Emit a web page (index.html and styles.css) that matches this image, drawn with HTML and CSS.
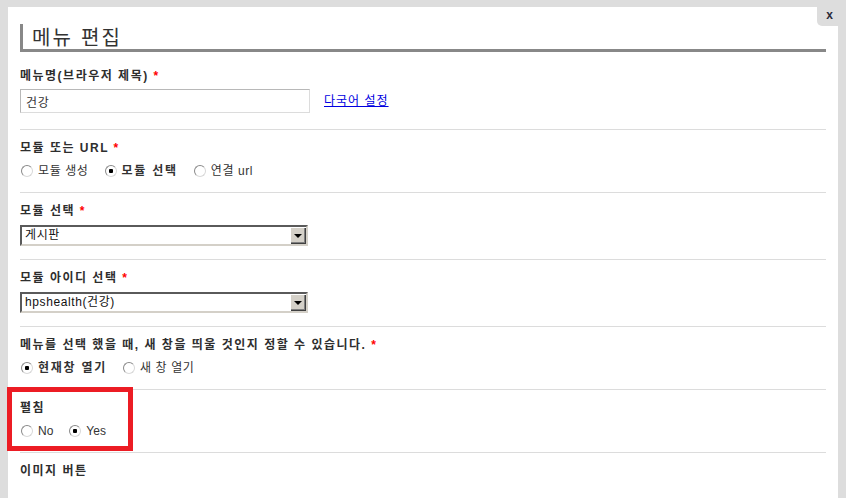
FILE: index.html
```html
<!DOCTYPE html>
<html lang="ko">

<head>
    <meta charset="UTF-8">
    <title>메뉴 편집</title>
    <link rel="stylesheet" href="styles.css">
</head>

<body>
    <div class="panel">
        <a class="close" href="#">x</a>
        <h1 class="title">메뉴 편집</h1>

        <div class="field first">
            <div class="field-label">메뉴명(브라우저 제목) <em>*</em></div>
            <div class="row">
                <input class="text-input" type="text" value="건강">
                <a class="link" href="#">다국어 설정</a>
            </div>
        </div>

        <div class="field">
            <div class="field-label">모듈 또는 URL <em>*</em></div>
            <div class="radios">
                <label><input type="radio" name="type">모듈 생성</label>
                <label class="on"><input type="radio" name="type" checked>모듈 선택</label>
                <label><input type="radio" name="type">연결 url</label>
            </div>
        </div>

        <div class="field">
            <div class="field-label">모듈 선택 <em>*</em></div>
            <div class="select"><span class="select-text">게시판</span><span class="select-btn"></span></div>
        </div>

        <div class="field">
            <div class="field-label">모듈 아이디 선택 <em>*</em></div>
            <div class="select"><span class="select-text">hpshealth(건강)</span><span class="select-btn"></span></div>
        </div>

        <div class="field">
            <div class="field-label">메뉴를 선택 했을 때, 새 창을 띄울 것인지 정할 수 있습니다. <em>*</em></div>
            <div class="radios">
                <label class="on"><input type="radio" name="target" checked>현재창 열기</label>
                <label><input type="radio" name="target">새 창 열기</label>
            </div>
        </div>

        <div class="field marked">
            <div class="field-label">펼침</div>
            <div class="radios latin">
                <label><input type="radio" name="expand">No</label>
                <label><input type="radio" name="expand" checked>Yes</label>
            </div>
            <div class="mark"></div>
        </div>

        <div class="field">
            <div class="field-label">이미지 버튼</div>
        </div>
    </div>
</body>

</html>
```

FILE: styles.css
```css
/* reset start */
* {
    padding: 0;
    margin: 0;
    box-sizing: border-box;
}

html,
body {
    width: 100%;
    height: 100%;
    overflow: hidden;
}

body {
    background: #dddddd;
    font-family: "Liberation Sans", "Noto Sans CJK KR", sans-serif;
    font-size: 12px;
    line-height: 16px;
    letter-spacing: .6px;
    color: #333;
}

/* reset end */


/* panel start */
.panel {
    position: relative;
    height: 100%;
    margin: 7px 8px 0 8px;
    padding: 17px 12px 0 12px;
    background: #fff;
}

.close {
    position: absolute;
    top: -7px;
    right: 0;
    width: 21px;
    height: 26px;
    padding: 7px 0 0 4px;
    background: #dddddd;
    border-bottom-left-radius: 5px;
    color: #2a2a3a;
    font-weight: bold;
    font-size: 12px;
    letter-spacing: 0;
    text-align: center;
    text-decoration: none;
}

.title {
    height: 28px;
    padding-left: 9px;
    border-left: 3px solid #888;
    border-bottom: 3px solid #888;
    font-family: "Noto Sans CJK KR", sans-serif;
    font-size: 20px;
    font-weight: normal;
    line-height: 25px;
    letter-spacing: 2.2px;
    color: #333;
}

/* panel end */


/* fields start */
.field {
    position: relative;
    padding: 10px 0 13px 0;
    border-top: 1px solid #dcdcdc;
}

.field.first {
    padding: 16px 0 16px 0;
    border-top: none;
}

.field-label {
    margin-bottom: 6px;
    font-weight: bold;
    letter-spacing: 1.5px;
    color: #2e2e2e;
}

.first .field-label {
    margin-bottom: 5px;
}

.field-label em {
    font-style: normal;
    color: #f00;
}

.row {
    display: flex;
    align-items: center;
}

.text-input {
    width: 290px;
    height: 24px;
    padding-left: 5px;
    border: 1px solid;
    border-color: #b8b8b8 #dcdcdc #dcdcdc #b8b8b8;
    font-family: inherit;
    font-size: 12px;
    letter-spacing: .6px;
    color: #333;
    outline: none;
}

.link {
    margin-left: 14px;
    color: #0000e0;
    letter-spacing: 1px;
    text-decoration: underline;
}

.radios {
    display: flex;
    align-items: center;
    height: 17px;
}

.radios label {
    display: flex;
    align-items: center;
    margin-right: 15px;
    color: #333;
}

.radios label.on {
    font-weight: bold;
    letter-spacing: 1.75px;
}

.radios.latin label {
    letter-spacing: 0;
}

.radios input {
    -webkit-appearance: none;
    appearance: none;
    width: 12px;
    height: 12px;
    margin: 0 5px 0 1px;
    border: 1px solid;
    border-color: #8a8a8a #d8d8d8 #d8d8d8 #8a8a8a;
    border-radius: 50%;
    background: #fff;
}

.radios input:checked {
    background: radial-gradient(circle, #000 0, #000 2px, #fff 2.5px);
}

.select {
    display: flex;
    align-items: stretch;
    width: 288px;
    height: 21px;
    border: 2px solid;
    border-color: #5a5a5a #d4d0c8 #d4d0c8 #5a5a5a;
    background: #fff;
}

.select-text {
    flex: 1;
    padding-left: 3px;
    line-height: 17px;
    color: #111;
}

.select-btn {
    position: relative;
    width: 16px;
    background: #d4d0c8;
    box-shadow: inset 1px 1px #fff, inset -1px -1px #404040, inset -2px -2px #808080;
}

.select-btn::after {
    content: "";
    position: absolute;
    top: 7px;
    left: 4px;
    border-left: 4px solid transparent;
    border-right: 4px solid transparent;
    border-top: 4px solid #000;
}

.mark {
    position: absolute;
    top: -3px;
    left: -13px;
    width: 126px;
    height: 64px;
    border: 5px solid #ec1c24;
}

/* fields end */
```
